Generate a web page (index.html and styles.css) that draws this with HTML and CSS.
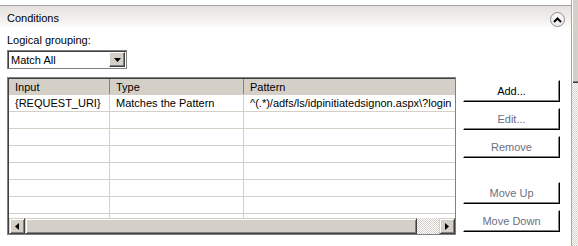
FILE: index.html
```html
<!DOCTYPE html>
<html lang="en">
  <head>
    <meta charset="UTF-8" />
    <title>Conditions</title>
    <link rel="stylesheet" href="styles.css">
  </head>
  <body>
    <div class="window">
      <div class="panel">
        <div class="section-head">
          <span class="section-title">Conditions</span>
          <span class="collapse">
            <svg width="9" height="6" viewBox="0 0 9 6"><path d="M1 5 L4.5 1.5 L8 5" fill="none" stroke="#000" stroke-width="2"/></svg>
          </span>
        </div>

        <div class="section-body">
          <label class="field-label">Logical grouping:</label>
          <div class="select">
            <span class="select-value">Match All</span>
            <span class="drop-btn">
              <svg width="7" height="4" viewBox="0 0 7 4"><path d="M0 0 H7 L3.5 4 Z" fill="#000"/></svg>
            </span>
          </div>

          <div class="grid-row">
            <div class="grid">
              <div class="grid-view">
                <table class="rules">
                  <thead>
                    <tr>
                      <th class="col-input">Input</th>
                      <th class="col-type">Type</th>
                      <th class="col-pattern">Pattern</th>
                    </tr>
                  </thead>
                  <tbody>
                    <tr>
                      <td>{REQUEST_URI}</td>
                      <td>Matches the Pattern</td>
                      <td>^(.*)/adfs/ls/idpinitiatedsignon.aspx\?login</td>
                    </tr>
                    <tr><td></td><td></td><td></td></tr>
                    <tr><td></td><td></td><td></td></tr>
                    <tr><td></td><td></td><td></td></tr>
                    <tr><td></td><td></td><td></td></tr>
                    <tr><td></td><td></td><td></td></tr>
                    <tr><td></td><td></td><td></td></tr>
                    <tr><td></td><td></td><td></td></tr>
                  </tbody>
                </table>
              </div>
              <div class="hscroll">
                <span class="arrow-btn">
                  <svg width="4" height="7" viewBox="0 0 4 7"><path d="M4 0 V7 L0 3.5 Z" fill="#000"/></svg>
                </span>
                <span class="hthumb"></span>
                <span class="track"></span>
                <span class="arrow-btn">
                  <svg width="4" height="7" viewBox="0 0 4 7"><path d="M0 0 V7 L4 3.5 Z" fill="#000"/></svg>
                </span>
              </div>
            </div>

            <div class="actions">
              <button class="btn btn-active">Add...</button>
              <button class="btn">Edit...</button>
              <button class="btn">Remove</button>
              <button class="btn btn-spaced">Move Up</button>
              <button class="btn">Move Down</button>
            </div>
          </div>
        </div>
      </div>

      <div class="vscroll">
        <div class="vthumb"></div>
      </div>
    </div>
  </body>
</html>
```

FILE: styles.css
```css
body {
  margin: 0;
  background-color: #fff;
  font-family: "Liberation Sans", Arial, sans-serif;
  font-size: 11px;
  color: #000;
}
.window {
  display: flex;
  height: 246px;
  overflow: hidden;
}
.panel {
  width: 572px;
  padding-top: 5px;
}
.section-head {
  display: flex;
  justify-content: space-between;
  align-items: center;
  height: 22px;
  padding: 1px 6px 0 7px;
  border-top: 1px solid #a5a4a8;
  background: linear-gradient(#e6e1dd, #f3f0ee 60%, #fff);
}
.collapse {
  display: flex;
  justify-content: center;
  align-items: center;
  width: 13px;
  height: 13px;
  margin-top: 3px;
  border: 1px solid #8f8f94;
  border-radius: 50%;
  background: radial-gradient(circle at 50% 35%, #fff, #e4e4e8);
}
.section-body {
  padding-left: 7px;
}
.field-label {
  display: block;
  margin-top: 5px;
  line-height: 13px;
}
.select {
  display: flex;
  justify-content: space-between;
  align-items: center;
  box-sizing: border-box;
  width: 120px;
  height: 19px;
  margin-top: 3px;
  padding: 1px 1px 1px 3px;
  border: 1px solid #808080;
  box-shadow: inset 1px 1px #404040;
  background-color: #fff;
}
.drop-btn {
  display: flex;
  justify-content: center;
  align-items: center;
  box-sizing: border-box;
  width: 16px;
  height: 15px;
  background-color: #d4d0c8;
  border: 1px solid;
  border-color: #fff #404040 #404040 #fff;
  box-shadow: inset -1px -1px #808080;
}
.grid-row {
  display: flex;
  margin-top: 8px;
}
.grid {
  display: flex;
  flex-direction: column;
  box-sizing: border-box;
  width: 449px;
  height: 158px;
  border: 1px solid #808080;
  box-shadow: inset 1px 1px #404040;
  padding: 1px 0 0 1px;
}
.grid-view {
  flex: 1;
  overflow: hidden;
}
.rules {
  border-collapse: collapse;
  table-layout: fixed;
  width: 500px;
}
.rules th,
.rules td {
  height: 16px;
  padding: 0 0 0 6px;
  text-align: left;
  font-weight: normal;
  white-space: nowrap;
  overflow: hidden;
  border-right: 1px solid #d4d0c8;
  border-bottom: 1px solid #d4d0c8;
}
.rules th {
  height: 15px;
  background-color: #d4d0c8;
  border-right: 1px solid #808080;
  border-bottom: 1px solid #d4d0c8;
}
.col-input {
  width: 94px;
}
.col-type {
  width: 127px;
}
.col-pattern {
  width: 300px;
}
.hscroll {
  display: flex;
  height: 16px;
}
.arrow-btn {
  display: flex;
  justify-content: center;
  align-items: center;
  box-sizing: border-box;
  width: 16px;
  height: 16px;
  background-color: #d4d0c8;
  border: 1px solid;
  border-color: #d4d0c8 #404040 #404040 #d4d0c8;
  box-shadow: inset 1px 1px #fff, inset -1px -1px #808080;
}
.hthumb {
  box-sizing: border-box;
  width: 392px;
  height: 16px;
  background-color: #d4d0c8;
  border: 1px solid;
  border-color: #d4d0c8 #404040 #404040 #d4d0c8;
  box-shadow: inset 1px 1px #fff, inset -1px -1px #808080;
}
.track {
  flex: 1;
  background-color: #fff;
  background-image: conic-gradient(#d4d0c8 25%, #fff 0 50%, #d4d0c8 0 75%, #fff 0);
  background-size: 2px 2px;
}
.actions {
  display: flex;
  flex-direction: column;
  gap: 6px;
  width: 97px;
  margin-left: 7px;
  padding-top: 3px;
}
.btn {
  box-sizing: border-box;
  height: 22px;
  padding: 0;
  border: 1px solid;
  border-color: #fff #000 #000 #fff;
  box-shadow: inset -1px -1px #808080;
  background-color: #fff;
  font-family: inherit;
  font-size: 11px;
  color: #6c6f82;
}
.btn-active {
  color: #000;
}
.btn-spaced {
  margin-top: 18px;
}
.vscroll {
  width: 6px;
  height: 246px;
  border-left: 1px solid #a5a4a8;
  background-color: #fff;
  background-image: conic-gradient(#d4d0c8 25%, #fff 0 50%, #d4d0c8 0 75%, #fff 0);
  background-size: 2px 2px;
}
.vthumb {
  height: 83px;
  background-color: #d4d0c8;
  box-shadow: inset 1px 0 #fff, inset 0 -1px #404040, inset 0 -2px #808080;
}
```
